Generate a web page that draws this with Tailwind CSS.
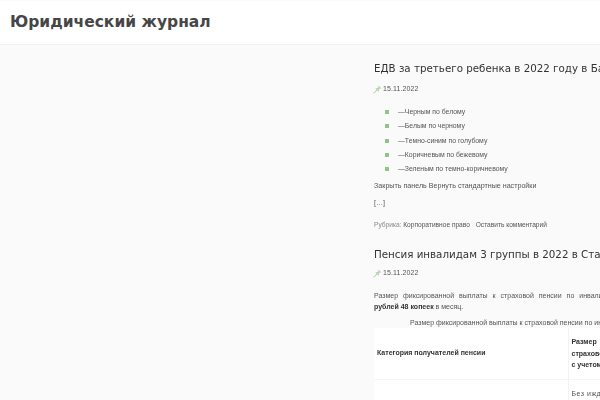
<!DOCTYPE html>
<html>
<head>
<meta charset="utf-8">
<script src="https://cdn.jsdelivr.net/npm/@tailwindcss/browser@4"></script>
</head>
<body class="w-[600px] h-[400px] overflow-hidden bg-[#fafafa] font-['DejaVu_Sans',sans-serif] text-[#555]">
<header class="h-[44px] mt-px bg-white border-b border-[#f2f2f2] pl-[10px] flex items-center">
  <div class="text-[15.5px] font-bold text-[#333] whitespace-nowrap leading-none opacity-90">Юридический журнал</div>
</header>
<main class="pl-[374px] w-[600px] overflow-hidden whitespace-nowrap font-['Liberation_Sans',sans-serif] [will-change:transform]">
  <article>
    <h2 class="text-[10.3px] leading-[18px] mt-[14px] text-[#333] font-['DejaVu_Sans',sans-serif]">ЕДВ за третьего ребенка в 2022 году в Башкирии</h2>
    <div class="flex items-center text-[7px] leading-[10px] mt-[7px] h-[10px]">
      <svg class="w-[9px] h-[9px] -ml-[1px] mr-[1px]" viewBox="0 0 8 8"><path d="M0.5 7.5 L3.5 4.5" stroke="#b9d8b0" stroke-width="0.9" fill="none"/><path d="M2 3 L4.6 2.4 L5 0.5 L7.5 3 L5.6 3.4 L5 6Z" fill="#b5d6ac"/></svg>
      <span class="tracking-[0.1px]">15.11.2022</span>
    </div>
    <ul class="mt-[11px] text-[6.85px] leading-[14.25px]">
      <li class="flex items-center"><span class="w-[4px] h-[4px] bg-[#8fc587] ml-[11px] mr-[9px]"></span>—Черным по белому</li>
      <li class="flex items-center"><span class="w-[4px] h-[4px] bg-[#8fc587] ml-[11px] mr-[9px]"></span>—Белым по черному</li>
      <li class="flex items-center"><span class="w-[4px] h-[4px] bg-[#8fc587] ml-[11px] mr-[9px]"></span>—Темно-синим по голубому</li>
      <li class="flex items-center"><span class="w-[4px] h-[4px] bg-[#8fc587] ml-[11px] mr-[9px]"></span>—Коричневым по бежевому</li>
      <li class="flex items-center"><span class="w-[4px] h-[4px] bg-[#8fc587] ml-[11px] mr-[9px]"></span>—Зеленым по темно-коричневому</li>
    </ul>
    <p class="text-[7.13px] leading-[10px] mt-[5px]">Закрыть панель Вернуть стандартные настройки</p>
    <p class="text-[7.13px] leading-[10px] mt-[7px]">[…]</p>
    <div class="text-[6.6px] leading-[10px] mt-[12px]"><span class="text-[#888]">Рубрика:</span> Корпоративное право <span class="ml-[4px]">Оставить комментарий</span></div>
  </article>
  <article>
    <h2 class="text-[10.3px] leading-[18px] mt-[15px] text-[#333] font-['DejaVu_Sans',sans-serif]">Пенсия инвалидам 3 группы в 2022 в Ставрополе</h2>
    <div class="flex items-center text-[7px] leading-[10px] mt-[5px] h-[10px]">
      <svg class="w-[9px] h-[9px] -ml-[1px] mr-[1px]" viewBox="0 0 8 8"><path d="M0.5 7.5 L3.5 4.5" stroke="#b9d8b0" stroke-width="0.9" fill="none"/><path d="M2 3 L4.6 2.4 L5 0.5 L7.5 3 L5.6 3.4 L5 6Z" fill="#b5d6ac"/></svg>
      <span class="tracking-[0.1px]">15.11.2022</span>
    </div>
    <p class="text-[7px] leading-[11px] mt-[12px] [word-spacing:3px]">Размер фиксированной выплаты к страховой пенсии по инвалидности</p>
    <p class="text-[7px] leading-[11px]"><b class="text-[#333]">рублей 48 копеек</b> в месяц.</p>
    <p class="text-[7px] leading-[11px] mt-[5px] ml-[36px]">Размер фиксированной выплаты к страховой пенсии по инвалидности</p>
    <table class="bg-white text-[7px] border-collapse">
      <tr class="h-[51px] border-b border-[#f5f5f5]">
        <th class="w-[194px] min-w-[194px] px-[3px] text-left font-bold text-[#333] border-r border-[#f2f2f2]">Категория получателей пенсии</th>
        <th class="w-[100px] px-[3px] text-left font-bold text-[#333] leading-[11.7px]">Размер<br>страховой<br>с учетом</th>
      </tr>
      <tr class="h-[40px]">
        <td class="border-r border-[#f2f2f2]"></td>
        <td class="px-[3px] align-top pt-[9px] tracking-[0.5px]">Без иждивенцев</td>
      </tr>
    </table>
  </article>
</main>
</body>
</html>
